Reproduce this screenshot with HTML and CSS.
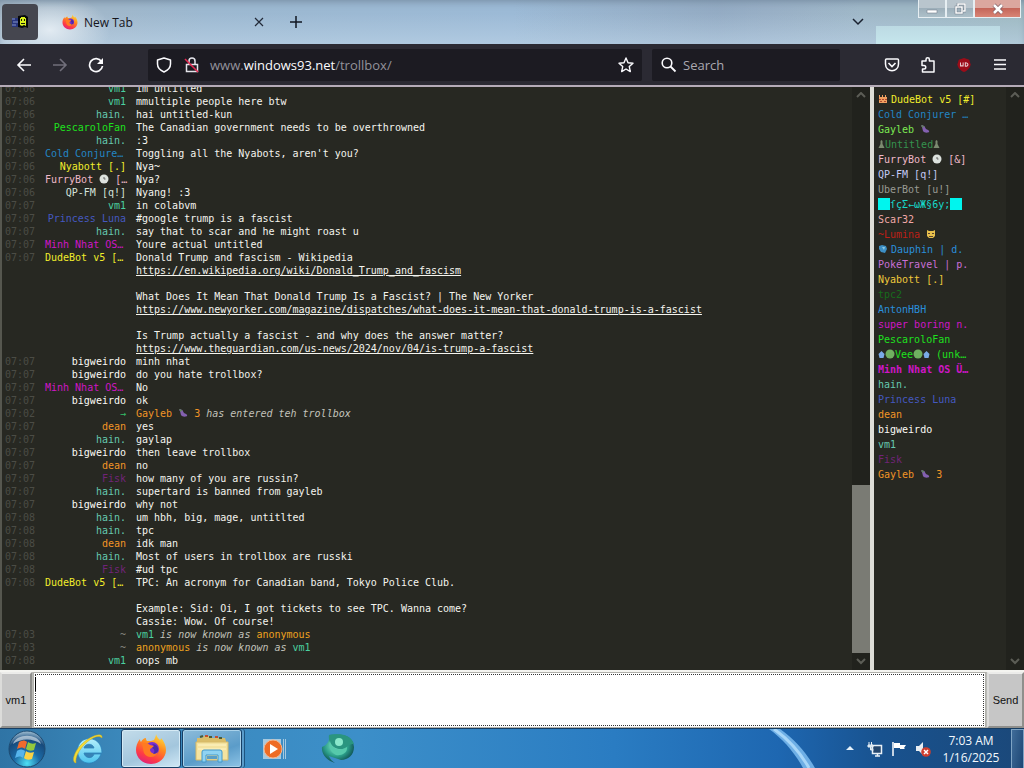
FILE: index.html
```html
<!DOCTYPE html>
<html lang="en">
<head>
<meta charset="utf-8">
<title>Trollbox</title>
<link rel="stylesheet" href="styles.css">
</head>
<body>
<svg class="defs" width="0" height="0" aria-hidden="true">
  <defs>
    <linearGradient id="fox" x1="0.8" y1="0" x2="0.3" y2="1"><stop offset="0" stop-color="#ffe23f"/><stop offset=".4" stop-color="#ff8a1f"/><stop offset=".75" stop-color="#ff3c44"/><stop offset="1" stop-color="#e0227a"/></linearGradient>
    <radialGradient id="orb" cx=".5" cy=".9" r=".9"><stop offset="0" stop-color="#4fe0f5"/><stop offset=".4" stop-color="#1c6aa5"/><stop offset=".75" stop-color="#174a7c"/><stop offset="1" stop-color="#a5c3d6"/></radialGradient>
    <linearGradient id="ie" x1="0" y1="0" x2="0" y2="1"><stop offset="0" stop-color="#b4effc"/><stop offset="1" stop-color="#4cc3ee"/></linearGradient>
    <radialGradient id="teal" cx=".45" cy=".4" r=".6"><stop offset="0" stop-color="#8ff0d2"/><stop offset=".6" stop-color="#2c9f8a"/><stop offset="1" stop-color="#0d4e50"/></radialGradient>
    <symbol id="firefox" viewBox="0 0 32 32">
      <path d="M21 1c1 3 2 4 4 6 1-1 1-1 1-2 3 3 5 8 5 12 0 8-7 14-15 14S1 25 1 17c0-4 1-7 4-11 0 1 0 2 1 3 1-2 3-4 5-4 0 1 0 2 1 3 3 0 5 0 7-1 1-2 2-4 2-6z" fill="url(#fox)"/>
      <circle cx="17" cy="16" r="7" fill="#7a2fd0"/>
      <path d="M7 11c3-2 6-1 8 1l4 1c-1 2-4 2-4 4 0 3 5 5 8 2-2 6-11 7-14 1-1-3-1-6-2-9z" fill="#ff7a22"/>
      <path d="M17 11c4 0 7 3 6 7-1 2-3 3-5 3 2-2 2-5-1-6l2-2z" fill="#4b2aa8"/>
    </symbol>
    <symbol id="eggplant" viewBox="0 0 10 10"><path d="M2 1l2 1c1 0 1 2 2 3s4 1 3 3c-1 1-5 1-6-1L2 3 1 2z" fill="#8360b0"/><path d="M1 1l3 1-1 2z" fill="#5d8a50"/></symbol>
    <symbol id="clock" viewBox="0 0 10 10"><circle cx="5" cy="5" r="4.5" fill="#dde2de"/><path d="M5 3v2h1.500" fill="none" stroke="#666"/></symbol>
    <symbol id="castle" viewBox="0 0 10 10"><path d="M1 1h1v2h2V1h1v2h2V1h1v2h1v6H1z" fill="#f0a060"/><path d="M1 5h2v1H1zM4 5h2v1H4zM7 5h2v1H7zM2 7h2v1H2zM6 7h2v1H6z" fill="#b04a30"/></symbol>
    <symbol id="person" viewBox="0 0 6 10"><path d="M3 1l1 1v3l2 4H0l2-4V2z" fill="#7c8a70"/></symbol>
    <symbol id="cat" viewBox="0 0 10 10"><path d="M1 1l2 1h4l2-1v6L7 9H3L1 7z" fill="#e7c04c"/><path d="M2 4h2v1H2zM6 4h2v1H6zM3 7h4v1H3z" fill="#5b4430"/></symbol>
    <symbol id="fish" viewBox="0 0 10 10"><path d="M1 2l3-1 4 1 1 3-2 4-4-1-2-3z" fill="#3d8fc4"/><path d="M4 3h3l-1 3z" fill="#8fcbe4"/></symbol>
    <symbol id="house" viewBox="0 0 7 10"><path d="M3.500 2l3 3-1 4h-4l-1-4z" fill="#7aaae8"/></symbol>
    <symbol id="ball" viewBox="0 0 10 10"><circle cx="5" cy="5" r="4.5" fill="#70b060"/></symbol>
  </defs>
</svg>

<header class="titlebar">
  <button class="pinned" aria-label="Windows 93 Trollbox">
    <svg width="18" height="14" viewBox="0 0 18 14"><path d="M1 3h6v9H1z" fill="#27347c"/><path d="M1 4h3M2 7h5M1 10h4" stroke="#8494c8" stroke-width="1"/><path d="M7 1l7-1 3 2v11l-3-1-3 1-4-1z" fill="#06080a"/><path d="M10 2h4v1h1v8l-2-1-2 1-2-1V3h1z" fill="#d8f01c"/><path d="M10 4h1v2h-1zM13 4h1v2h-1zM10 8h4v1h-4z" fill="#15180a"/></svg>
  </button>
  <div class="tab">
    <svg width="16" height="16"><use href="#firefox"/></svg>
    <span class="tab-name">New Tab</span>
    <button class="plain" aria-label="Close tab"><svg width="10" height="10" viewBox="0 0 10 10"><path d="M1 1l8 8M9 1l-8 8" stroke="#222a38" stroke-width="1.200"/></svg></button>
  </div>
  <button class="plain newtab" aria-label="New tab"><svg width="12" height="12" viewBox="0 0 12 12"><path d="M6 0v12M0 6h12" stroke="#111722" stroke-width="1.500"/></svg></button>
  <button class="plain alltabs" aria-label="List all tabs"><svg width="12" height="8" viewBox="0 0 12 8"><path d="M1 1l5 5 5-5" fill="none" stroke="#1a2130" stroke-width="1.500"/></svg></button>
  <div class="window-buttons">
    <button aria-label="Minimize"><svg width="12" height="12" viewBox="0 0 12 12"><path d="M1 7h10v3H1z" fill="#fff" stroke="#77818e" stroke-width=".6"/></svg></button>
    <button aria-label="Restore"><svg width="12" height="12" viewBox="0 0 12 12"><path d="M4 3V1h7v7H9M2 4h6v6H2z" fill="none" stroke="#6f7a86" stroke-width="2.500"/><path d="M4 3V1h7v7H9M2 4h6v6H2z" fill="none" stroke="#fff" stroke-width="1.500"/></svg></button>
    <button class="close" aria-label="Close"><svg width="12" height="12" viewBox="0 0 12 12"><path d="M2 2l8 8M10 2l-8 8" stroke="#7d5a62" stroke-width="4"/><path d="M2 2l8 8M10 2l-8 8" stroke="#fff" stroke-width="2.600"/></svg></button>
  </div>
</header>

<nav class="toolbar">
  <button class="tool" aria-label="Back"><svg width="16" height="16" viewBox="0 0 16 16"><path d="M15 8H2M8 2L2 8l6 6" fill="none" stroke="#fbfbfe" stroke-width="1.600"/></svg></button>
  <button class="tool" aria-label="Forward"><svg width="16" height="16" viewBox="0 0 16 16"><path d="M1 8h13M8 2l6 6-6 6" fill="none" stroke="#716f7b" stroke-width="1.600"/></svg></button>
  <button class="tool" aria-label="Reload"><svg width="16" height="16" viewBox="0 0 16 16"><path d="M13.500 4.500A6.500 6.500 0 1 0 14.500 9" fill="none" stroke="#fbfbfe" stroke-width="1.700"/><path d="M15 1v6H9z" fill="#fbfbfe"/></svg></button>
  <div class="urlbar">
    <svg width="16" height="16" viewBox="0 0 16 16"><path d="M8 1l6.500 2v4c0 4-2 6-6.500 8-4.500-2-6.500-4-6.500-8V3z" fill="none" stroke="#fbfbfe" stroke-width="1.500" stroke-linejoin="round"/></svg>
    <svg class="lock" width="16" height="16" viewBox="0 0 16 16"><path d="M5 7V4c0-4 6-4 6 0v3M2.500 7.500h11v7h-11z" fill="none" stroke="#e4e4ea" stroke-width="1.500"/><path d="M1 2l13 13" stroke="#e22850" stroke-width="1.600"/></svg>
    <div class="url" role="textbox" aria-label="Address" tabindex="0">www.<b>windows93.net</b>/trollbox/</div>
    <button class="plain" aria-label="Bookmark this page"><svg width="16" height="16" viewBox="0 0 16 16"><path d="M8 1l2 4.700 5 .5-3.700 3.400 1 5L8 12l-4.300 2.600 1-5L1 6.200l5-.5z" fill="none" stroke="#fbfbfe" stroke-width="1.400" stroke-linejoin="round"/></svg></button>
  </div>
  <label class="searchbar">
    <svg width="16" height="16" viewBox="0 0 16 16"><circle cx="6" cy="6" r="4.800" fill="none" stroke="#fbfbfe" stroke-width="1.600"/><path d="M9.500 9.500l5 5" stroke="#fbfbfe" stroke-width="1.800"/></svg>
    <input type="text" placeholder="Search" aria-label="Search">
  </label>
  <div class="extensions">
    <button class="tool" aria-label="Save to Pocket"><svg width="16" height="16" viewBox="0 0 16 16"><path d="M2.500 2h11q1 0 1 1v4c0 9-13 9-13 0V3q0-1 1-1z" fill="none" stroke="#fbfbfe" stroke-width="1.500"/><path d="M4.500 6L8 9.500 11.500 6" fill="none" stroke="#fbfbfe" stroke-width="1.600"/></svg></button>
    <button class="tool" aria-label="Extensions"><svg width="16" height="16" viewBox="0 0 16 16"><path d="M6 4V2.500a1.700 1.700 0 0 1 3.400 0V4H14v11H2.500v-3H4a1.700 1.700 0 0 0 0-3.500H2V4z" fill="none" stroke="#fbfbfe" stroke-width="1.500" stroke-linejoin="round"/></svg></button>
    <button class="tool" aria-label="uBlock"><svg width="14" height="14" viewBox="0 0 16 16"><path d="M8 0l6 2 1.500 5c0 4-3.500 7-7.500 9-4-2-7.500-5-7.500-9L2 2z" fill="#9c0c18"/><path d="M4 5v4h3V5M9.500 5.500v4c4 0 4-4 0-4z" fill="none" stroke="#e8c8cc" stroke-width="1.200"/></svg></button>
    <button class="tool" aria-label="Menu"><svg width="16" height="16" viewBox="0 0 16 16"><path d="M2 3h12M2 7.500h12M2 12h12" stroke="#fbfbfe" stroke-width="1.400"/></svg></button>
  </div>
</nav>

<main class="trollbox">
  <section class="chat">
    <ul class="log">
      <li><time>07:06</time><span class="nick mint">vm1</span><p>im untitled</p></li>
      <li><time>07:06</time><span class="nick mint">vm1</span><p>mmultiple people here btw</p></li>
      <li><time>07:06</time><span class="nick aqua">hain.</span><p>hai untitled-kun</p></li>
      <li><time>07:06</time><span class="nick lime">PescaroloFan</span><p>The Canadian government needs to be overthrowned</p></li>
      <li><time>07:06</time><span class="nick aqua">hain.</span><p>:3</p></li>
      <li><time>07:06</time><span class="nick cut sky">Cold Conjure…</span><p>Toggling all the Nyabots, aren't you?</p></li>
      <li><time>07:06</time><span class="nick yellow">Nyabott [.]</span><p>Nya~</p></li>
      <li><time>07:06</time><span class="nick cut pink">FurryBot <svg class="emoji"><use href="#clock"/></svg> […</span><p>Nya?</p></li>
      <li><time>07:06</time><span class="nick pale">QP-FM [q!]</span><p>Nyang! :3</p></li>
      <li><time>07:07</time><span class="nick mint">vm1</span><p>in colabvm</p></li>
      <li><time>07:07</time><span class="nick royal">Princess Luna</span><p>#google trump is a fascist</p></li>
      <li><time>07:07</time><span class="nick aqua">hain.</span><p>say that to scar and he might roast u</p></li>
      <li><time>07:07</time><span class="nick cut magenta">Minh Nhat OS…</span><p>Youre actual untitled</p></li>
      <li><time>07:07</time><span class="nick cut yellow">DudeBot v5 […</span><p>Donald Trump and fascism - Wikipedia<br><a href="https://en.wikipedia.org/wiki/Donald_Trump_and_fascism">https://en.wikipedia.org/wiki/Donald_Trump_and_fascism</a><br><br>What Does It Mean That Donald Trump Is a Fascist? | The New Yorker<br><a href="https://www.newyorker.com/magazine/dispatches/what-does-it-mean-that-donald-trump-is-a-fascist">https://www.newyorker.com/magazine/dispatches/what-does-it-mean-that-donald-trump-is-a-fascist</a><br><br>Is Trump actually a fascist - and why does the answer matter?<br><a href="https://www.theguardian.com/us-news/2024/nov/04/is-trump-a-fascist">https://www.theguardian.com/us-news/2024/nov/04/is-trump-a-fascist</a></p></li>
      <li><time>07:07</time><span class="nick white">bigweirdo</span><p>minh nhat</p></li>
      <li><time>07:07</time><span class="nick white">bigweirdo</span><p>do you hate trollbox?</p></li>
      <li><time>07:07</time><span class="nick cut magenta">Minh Nhat OS…</span><p>No</p></li>
      <li><time>07:07</time><span class="nick white">bigweirdo</span><p>ok</p></li>
      <li><time>07:02</time><span class="nick green">→</span><p class="event"><span class="orange">Gayleb <svg class="emoji"><use href="#eggplant"/></svg> 3</span> <em>has entered teh trollbox</em></p></li>
      <li><time>07:07</time><span class="nick orange">dean</span><p>yes</p></li>
      <li><time>07:07</time><span class="nick aqua">hain.</span><p>gaylap</p></li>
      <li><time>07:07</time><span class="nick white">bigweirdo</span><p>then leave trollbox</p></li>
      <li><time>07:07</time><span class="nick orange">dean</span><p>no</p></li>
      <li><time>07:07</time><span class="nick purple">Fisk</span><p>how many of you are russin?</p></li>
      <li><time>07:07</time><span class="nick aqua">hain.</span><p>supertard is banned from gayleb</p></li>
      <li><time>07:07</time><span class="nick white">bigweirdo</span><p>why not</p></li>
      <li><time>07:08</time><span class="nick aqua">hain.</span><p>um hbh, big, mage, untitlted</p></li>
      <li><time>07:08</time><span class="nick aqua">hain.</span><p>tpc</p></li>
      <li><time>07:08</time><span class="nick orange">dean</span><p>idk man</p></li>
      <li><time>07:08</time><span class="nick aqua">hain.</span><p>Most of users in trollbox are russki</p></li>
      <li><time>07:08</time><span class="nick purple">Fisk</span><p>#ud tpc</p></li>
      <li><time>07:08</time><span class="nick cut yellow">DudeBot v5 […</span><p>TPC: An acronym for Canadian band, Tokyo Police Club.<br><br>Example: Sid: Oi, I got tickets to see TPC. Wanna come?<br>Cassie: Wow. Of course!</p></li>
      <li><time>07:03</time><span class="nick grey">~</span><p class="event"><span class="mint">vm1</span> <em>is now known as</em> <span class="amber">anonymous</span></p></li>
      <li><time>07:03</time><span class="nick grey">~</span><p class="event"><span class="amber">anonymous</span> <em>is now known as</em> <span class="mint">vm1</span></p></li>
      <li><time>07:08</time><span class="nick mint">vm1</span><p>oops mb</p></li>
    </ul>
    <div class="scroll" aria-hidden="true">
      <svg width="10" height="7" viewBox="0 0 10 7"><path d="M1 5l4-4 4 4" fill="none" stroke="#5c5d56" stroke-width="2"/></svg>
      <span class="space"></span><span class="thumb"></span>
      <svg width="10" height="7" viewBox="0 0 10 7"><path d="M1 1l4 4 4-4" fill="none" stroke="#5c5d56" stroke-width="2"/></svg>
    </div>
  </section>
  <aside class="users">
    <ul>
      <li class="yellow"><svg class="emoji lead"><use href="#castle"/></svg>DudeBot v5 [#]</li>
      <li class="sky">Cold Conjurer …</li>
      <li class="spring">Gayleb <svg class="emoji"><use href="#eggplant"/></svg></li>
      <li class="leaf"><svg class="emoji slim"><use href="#person"/></svg>Untitled<svg class="emoji slim"><use href="#person"/></svg></li>
      <li class="pink">FurryBot <svg class="emoji"><use href="#clock"/></svg> [&amp;]</li>
      <li class="lavender">QP-FM [q!]</li>
      <li class="dim">UberBot [u!]</li>
      <li class="cyan"><i class="block"></i>ſçΣ←ωЖ§6y;<i class="block"></i></li>
      <li class="rose">Scar32</li>
      <li class="red">~Lumina <svg class="emoji"><use href="#cat"/></svg></li>
      <li class="azure"><svg class="emoji lead"><use href="#fish"/></svg>Dauphin | d.</li>
      <li class="orchid">PokéTravel | p.</li>
      <li class="gold">Nyabott [.]</li>
      <li class="forest">tpc2</li>
      <li class="azure">AntonHBH</li>
      <li class="magenta">super boring n.</li>
      <li class="lime">PescaroloFan</li>
      <li class="lime"><svg class="emoji slim"><use href="#house"/></svg><svg class="emoji"><use href="#ball"/></svg>Vee<svg class="emoji"><use href="#ball"/></svg><svg class="emoji slim"><use href="#house"/></svg> (unk…</li>
      <li class="magenta strong">Minh Nhat OS Ü…</li>
      <li class="aqua">hain.</li>
      <li class="royal">Princess Luna</li>
      <li class="orange">dean</li>
      <li class="white">bigweirdo</li>
      <li class="aqua">vm1</li>
      <li class="purple">Fisk</li>
      <li class="orange">Gayleb <svg class="emoji"><use href="#eggplant"/></svg> 3</li>
    </ul>
    <div class="scroll" aria-hidden="true">
      <svg width="10" height="7" viewBox="0 0 10 7"><path d="M1 5l4-4 4 4" fill="none" stroke="#5c5d56" stroke-width="2"/></svg>
      <svg width="10" height="7" viewBox="0 0 10 7"><path d="M1 1l4 4 4-4" fill="none" stroke="#5c5d56" stroke-width="2"/></svg>
    </div>
  </aside>
</main>

<form class="compose">
  <button type="button" class="side">vm1</button>
  <div class="field"><textarea aria-label="Message"></textarea><span class="caret"></span></div>
  <button type="button" class="side">Send</button>
</form>

<footer class="taskbar">
  <svg class="streak" width="60" height="39" viewBox="0 0 60 39" aria-hidden="true"><path d="M1 0h11c14 10 26 23 35 39H35C27 24 15 10 1 0z" fill="#7dbcf0" opacity=".85"/><path d="M6 0c14 10 26 23 35 39" fill="none" stroke="#a8d6f8" stroke-width="3"/></svg>
  <button class="start" aria-label="Start"><svg width="38" height="38" viewBox="0 0 38 38"><circle cx="19" cy="19" r="18" fill="url(#orb)" stroke="#1d4a70"/><path d="M5 14C8 3 30 3 33 14 25 8 13 8 5 14z" fill="#dbe7ee" opacity=".65"/><path d="M11 12c3-2 6-2 8 0l-2 7c-2-2-5-2-8 0z" fill="#ef6a2e"/><path d="M20 12c3 2 5 2 8 1l-2 7c-3 1-5 1-8-1z" fill="#92c83e"/><path d="M9 21c3-2 5-2 8 0l-2 7c-2-2-5-2-8 0z" fill="#56b4ec"/><path d="M18 21c2 2 5 2 8 1l-2 7c-3 1-6 1-8-1z" fill="#fbd244"/></svg></button>
  <button class="task" aria-label="Internet Explorer"><svg width="34" height="34" viewBox="0 0 34 34"><path d="M30 22c-2 6-8 10-14 9C4 29 3 10 15 7c10-2 16 5 16 14H13c1 6 9 6 10 1zM13 16h10c-1-5-9-5-10 0z" fill="url(#ie)" stroke="#2b83bb" stroke-width=".8"/><path d="M5 31c-5-1-2-12 7-20S32 0 31 6c-3-4-11 0-17 6S4 25 5 31z" fill="#f4dc35" stroke="#c9a821" stroke-width=".5"/></svg></button>
  <button class="task active" aria-label="Firefox"><svg width="32" height="32"><use href="#firefox"/></svg></button>
  <button class="task open" aria-label="Windows Explorer"><svg width="36" height="30" viewBox="0 0 36 30"><path d="M3 4h5l2-2h5l1 2h15l1 3v19H3z" fill="#d9bd69"/><path d="M6 3l3-1M15 3h3M25 4h3" stroke="#4a5c38" stroke-width="2"/><path d="M11 2h3M21 3h3" stroke="#c04f31" stroke-width="2"/><path d="M2 8h32v18H2z" fill="#f4e3a0" stroke="#d6b967"/><path d="M4 11h28M4 15h28" stroke="#fff5c6"/><path d="M8 28V18q0-2 2-2h16q2 0 2 2v10h-4v-7H12v7z" fill="#8fd3f2" stroke="#4298cb"/><path d="M13 22h10v3H13z" fill="#5a9fc8"/></svg></button>
  <button class="task" aria-label="Windows Media Player"><svg width="26" height="26" viewBox="0 0 26 26"><path d="M1 3h18v20H1zM21 3h1v20h-1zM23 3h1v20h-1z" fill="#a7c9df"/><circle cx="11" cy="13" r="9" fill="#ee6c25" stroke="#f8b58a"/><path d="M8 8l8 5-8 5z" fill="#fff"/></svg></button>
  <button class="task last" aria-label="Globe"><svg width="34" height="30" viewBox="0 0 34 30"><path d="M1 13C6 11 9 7 8 1c11-2 24 0 25 12 0 8-6 13-13 13L8 22c1 3 3 5 6 7C7 27 0 21 1 13z" fill="url(#teal)"/><path d="M8 1c11-2 22-1 25 9-5-1-8 6-15 5C10 14 7 7 8 1z" fill="#2a9580"/><path d="M9 7c2 8 10 11 17 6 1 6-6 9-11 8-5-2-8-8-6-14z" fill="#56c9ab"/><circle cx="18" cy="8" r="4" fill="#8ae8cb"/></svg></button>
  <div class="tray">
    <button class="plain" aria-label="Show hidden icons"><svg width="8" height="5" viewBox="0 0 8 5"><path d="M4 0l4 4H0z" fill="#e6f2fa"/></svg></button>
    <svg width="16" height="16" viewBox="0 0 16 16"><path d="M5.500 4.500h9v8h-9zM8 15h5M10.500 13v2" fill="#24466d" stroke="#e8f0f6" stroke-width="1.500"/><path d="M2 1v3M4.500 1v3M1 4h5v2H1zM3.500 6v3h3" fill="#cfe0ec" stroke="#e8f0f6"/></svg>
    <svg width="16" height="16" viewBox="0 0 16 16"><path d="M2 1v14" stroke="#fff" stroke-width="1.500"/><path d="M3 2h6v2h6l-2 3 1 1H9V7H3z" fill="#fff"/></svg>
    <svg width="16" height="16" viewBox="0 0 16 16"><path d="M1 5h3l4-4v13l-4-4H1z" fill="#e8eef2"/><circle cx="11" cy="11" r="4.800" fill="#cf3e2e"/><path d="M9 9l4 4M13 9l-4 4" stroke="#fff" stroke-width="1.500"/></svg>
  </div>
  <div class="clock"><span>7:03 AM</span><span>1/16/2025</span></div>
  <button class="peek" aria-label="Show desktop"></button>
</footer>
</body>
</html>
```

FILE: styles.css
```css
* { box-sizing: border-box; }
.defs { position: absolute; }
svg { display: block; flex: none; }
button { margin: 0; padding: 0; border: 0; background: none; display: flex; align-items: center; justify-content: center; flex: none; }
ul { margin: 0; padding: 0; list-style: none; }

body {
  margin: 0;
  height: 100vh;
  display: flex;
  flex-direction: column;
  overflow: hidden;
  background: #272822;
  font-family: "Open Sans", "Noto Sans", sans-serif;
}

/* Title bar */
.titlebar {
  flex: none;
  height: 44px;
  display: flex;
  align-items: center;
  padding-left: 2px;
  background:
    radial-gradient(ellipse 60px 36px at 50px 30px, #e2ebf2 0, transparent 100%),
    linear-gradient(transparent 30%, #bdd4e899 100%),
    linear-gradient(90deg, transparent 50%, #8299b466 70%, transparent 84%),
    linear-gradient(90deg, #a4b6c4 0, #9cb8d0 20%, #9cbad6 50%, #a0b7cc 75%, #9eb9c1 100%);
  box-shadow: inset 0 5px 8px -4px #71869c;
}
.pinned { width: 36px; height: 36px; border-radius: 4px; background: #45464f; }
.tab { display: flex; align-items: center; width: 202px; margin-left: 24px; color: #15141a; font-size: 12px; }
.tab-name { flex: 1; margin-left: 6px; }
.newtab { margin-left: 26px; }
.alltabs { margin-left: auto; margin-right: 12px; }
.window-buttons {
  align-self: stretch;
  display: flex;
  align-items: flex-start;
  width: 148px;
  padding: 0 3px 0 42px;
  background: linear-gradient(#bcdae3, #c5e6ec) no-repeat 0 26px / 124px 18px;
}
.window-buttons button {
  width: 28px;
  height: 18px;
  border: 1px solid #e6eef2;
  border-top: 0;
  background: linear-gradient(#b9c5cd 45%, #9dafba 50%, #adc0c9);
}
.window-buttons .close { flex: 1; background: linear-gradient(#dba79f 45%, #c4665a 50%, #d98475); }

/* Navigation bar */
.toolbar { flex: none; height: 41px; display: flex; align-items: center; background: #2b2a33; padding: 0 6px; }
.tool { width: 36px; height: 32px; }
.urlbar, .searchbar { height: 32px; display: flex; align-items: center; background: #1c1b22; border-radius: 2px; }
.urlbar { flex: 5; margin-left: 34px; padding: 0 8px; color: #93929b; }
.lock { margin-left: 12px; }
.url { flex: 1; margin-left: 10px; font-size: 13px; }
.url b { font-weight: 400; color: #fbfbfe; }
.searchbar { width: 188px; margin-left: 10px; padding: 0 9px; }
.searchbar input { min-width: 0; flex: 1; border: 0; margin-left: 6px; padding: 0; background: none; color: #fbfbfe; font: 13px "Open Sans", sans-serif; outline: 0; }
.searchbar input::placeholder { color: #aaa9b1; opacity: 1; }
.extensions { display: flex; margin-left: 34px; }

/* Trollbox */
.trollbox {
  flex: 1;
  min-height: 0;
  display: flex;
  border-top: 2px solid #b5abb8;
  border-bottom: 2px solid #f4f4f0;
  font: 10px/13px "DejaVu Sans Mono", monospace;
}
.chat { flex: 1; min-width: 0; display: flex; border-left: 2px solid #56574f; overflow: hidden; }
.log { flex: 1; min-width: 0; display: flex; flex-direction: column; justify-content: flex-end; padding: 0 0 3px 3px; }
.log li { display: grid; grid-template-columns: 40px 81px 1fr; flex: none; }
.log time { color: #4b4c45; }
.log p { margin: 0 0 0 10px; color: #f4f4ee; }
.log a { color: #f4f4ee; }
.nick { text-align: right; white-space: nowrap; }
.nick.cut { text-align: left; }
.event em { color: #c2c2ba; }
.emoji { display: inline-block; width: 10px; height: 10px; vertical-align: -1px; }
.emoji.slim { width: 7px; }
.emoji.lead { margin-right: 3px; }

.scroll { flex: none; width: 18px; display: flex; flex-direction: column; align-items: center; justify-content: space-between; padding: 5px 0; background: #21221d; }
.space { flex: 390; }
.thumb { flex: 170; align-self: stretch; margin-bottom: 5px; background: #7a7b74; }

.users { flex: none; width: 154px; display: flex; border-left: 4px solid #deded8; line-height: 15px; }
.users ul { flex: 1; min-width: 0; padding: 5px 0 0 4px; white-space: nowrap; overflow: hidden; }
.users li { height: 15px; }
.block { display: inline-block; width: 12px; height: 12px; background: #00f5ee; vertical-align: -2px; }
.strong { font-weight: 700; }

.mint { color: #4bd0a0; }
.aqua { color: #66c8b0; }
.lime { color: #1ee01e; }
.spring { color: #7de852; }
.leaf { color: #35924e; }
.green { color: #35c06a; }
.forest { color: #176b1c; }
.sky { color: #2385c4; }
.azure { color: #2a8fdc; }
.royal { color: #4558c0; }
.lavender { color: #c3c8f5; }
.cyan { color: #16d8cc; }
.yellow { color: #f0ec2c; }
.gold { color: #efc93c; }
.amber { color: #eda21f; }
.orange { color: #f09426; }
.red { color: #bd1f16; }
.rose { color: #f0a8a8; }
.pink { color: #efb9c8; }
.orchid { color: #c76fd6; }
.magenta { color: #cf16c6; }
.purple { color: #702478; }
.pale { color: #d5e2da; }
.dim { color: #999a92; }
.grey { color: #85867f; }
.white { color: #fbfbf5; }

/* Message form */
.compose { flex: none; height: 56px; display: flex; gap: 1px; background: #b8b8b4; }
.side { width: 32px; border: 2px solid; border-color: #ececea #8f8f8c #8f8f8c #dcdcda; background: #c6c6c6; color: #111; font: 11px "Liberation Sans", Arial, sans-serif; }
.side:last-child { width: 37px; }
.field { flex: 1; position: relative; display: flex; padding: 1px; border: 1px solid #b0b0aa; background: #fff; }
.field textarea { flex: 1; border: 1px dotted #333; margin: 0; padding: 2px; resize: none; background: #fff; outline: 0; font: 11px "Liberation Sans", Arial, sans-serif; }
.caret { position: absolute; left: 1px; top: 4px; width: 1px; height: 14px; background: #000; }

/* Taskbar */
.taskbar {
  flex: none;
  height: 40px;
  position: relative;
  display: flex;
  align-items: center;
  border-top: 1px solid #173d62;
  padding-left: 8px;
  color: #f3f8fc;
  background: linear-gradient(90deg, #2f74a5 0, #3b88bb 12%, #3c8fc9 35%, #2a7cc2 60%, #1e67b1 76%, #18528f 86%, #1b4879 100%);
}
.streak { position: absolute; top: 0; right: 196px; }
.start { width: 38px; height: 38px; }
.task { width: 57px; height: 39px; margin-left: 4px; }
.start + .task { width: 64px; margin-left: 10px; }
.task.active, .task.open { border: 1px solid #163f66; border-radius: 3px; box-shadow: inset 0 0 0 1px #d5eaf5; margin-left: 1px; width: 60px; }
.task.active { background: linear-gradient(160deg, #c3dcea, #a3c6dd 60%, #d0e8f5); }
.task.open { background: linear-gradient(160deg, #8dbcda, #5b9cc9 60%, #8ec4e6); box-shadow: inset 0 0 0 1px #a9d2ea, 2px 0 0 #5a9cca, 3px 0 0 #1d547f; }
.task.last { margin-left: 6px; }
.tray { display: flex; align-items: center; gap: 8px; margin-left: auto; }
.tray .plain { margin-right: 5px; }
.clock { width: 80px; display: flex; flex-direction: column; align-items: center; font-size: 12px; line-height: 17px; }
.peek { width: 13px; height: 39px; border: 1px solid #7fa4c4; border-bottom: 0; background: linear-gradient(100deg, #3f6c99, #1d4674); }
```
